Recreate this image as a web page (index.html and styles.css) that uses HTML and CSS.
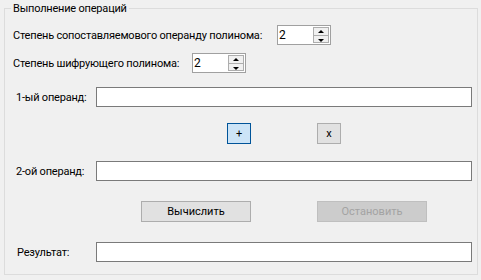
FILE: index.html
```html
<!DOCTYPE html>
<html lang="ru">
<head>
  <meta charset="UTF-8" />
  <title>Выполнение операций</title>
  <link rel="stylesheet" href="styles.css">
</head>
<body>

<fieldset class="group">
  <legend>Выполнение операций</legend>

  <div class="row row-deg1">
    <label class="lbl lbl-deg1">Степень сопоставляемового операнду полинома:</label>
    <div class="spin">
      <input type="text" value="2" />
      <div class="spin-btns">
        <span class="spin-up"></span>
        <span class="spin-down"></span>
      </div>
    </div>
  </div>

  <div class="row row-deg2">
    <label class="lbl lbl-deg2">Степень шифрующего полинома:</label>
    <div class="spin">
      <input type="text" value="2" />
      <div class="spin-btns">
        <span class="spin-up"></span>
        <span class="spin-down"></span>
      </div>
    </div>
  </div>

  <div class="row row-op1">
    <label class="lbl lbl-op">1-ый операнд:</label>
    <input class="field" type="text" />
  </div>

  <div class="row row-ops">
    <button class="btn small focus">+</button>
    <button class="btn small">x</button>
  </div>

  <div class="row row-op2">
    <label class="lbl lbl-op">2-ой операнд:</label>
    <input class="field" type="text" />
  </div>

  <div class="row row-actions">
    <button class="btn wide">Вычислить</button>
    <button class="btn wide" disabled>Остановить</button>
  </div>

  <div class="row row-result">
    <label class="lbl lbl-res">Результат:</label>
    <input class="field" type="text" />
  </div>
</fieldset>

</body>
</html>
```

FILE: styles.css
```css
body {
  margin: 0;
  background: #f0f0f0;
  font-family: Roboto, 'Liberation Sans', Arial, sans-serif;
  font-size: 11px;
  letter-spacing: -0.2px;
  color: #000;
}
.group {
  margin: 1px 3px 5px 4px;
  padding: 0 0 12px 0;
  border: 1px solid #dcdcdc;
  min-width: 0;
}
.group legend {
  margin-left: 6px;
  padding: 0 2px;
  line-height: 15px;
}
.row {
  display: flex;
  align-items: center;
  height: 20px;
}
.row-deg1 { margin-top: 9px; padding-left: 8px; }
.row-deg2 { margin-top: 8px; padding-left: 8px; }
.row-op1 { margin-top: 14px; padding-left: 11px; }
.row-ops { margin-top: 16px; height: 21px; padding-left: 222px; gap: 66px; }
.row-op2 { margin-top: 17px; padding-left: 11px; }
.row-actions { margin-top: 20px; height: 21px; padding-left: 136px; gap: 66px; }
.row-result { margin-top: 20px; padding-left: 12px; }

.lbl {
  flex: none;
  white-space: nowrap;
}
.lbl-deg1 { width: 264px; }
.lbl-deg2 { width: 179px; }
.lbl-op { width: 80px; }
.lbl-res { width: 79px; }

.field {
  width: 376px;
  height: 20px;
  box-sizing: border-box;
  border: 1px solid #7a7a7a;
  background: #fff;
  margin: 0;
  padding: 0 2px;
  font: inherit;
}

.spin {
  display: flex;
  width: 54px;
  height: 20px;
  box-sizing: border-box;
  border: 1px solid #a0a0a0;
  background: #fff;
}
.spin input {
  flex: 1;
  min-width: 0;
  border: none;
  margin: 0;
  padding: 0 1px;
  font: inherit;
  font-size: 12px;
  outline: none;
  background: transparent;
}
.spin-btns {
  display: flex;
  flex-direction: column;
  width: 16px;
  padding: 1px 1px 1px 0;
}
.spin-up, .spin-down {
  flex: 1;
  position: relative;
  background: #f0f0f0;
  border: 1px solid #adadad;
}
.spin-up { border-bottom-width: 0; }
.spin-up::after, .spin-down::after {
  content: '';
  position: absolute;
  left: 4px;
  border-left: 3px solid transparent;
  border-right: 3px solid transparent;
}
.spin-up::after { top: 2px; border-bottom: 3px solid #000; }
.spin-down::after { top: 3px; border-top: 3px solid #000; }

.btn {
  box-sizing: border-box;
  height: 21px;
  margin: 0;
  padding: 0;
  border: 1px solid #adadad;
  background: #e1e1e1;
  font: inherit;
  color: #000;
}
.btn.small { width: 24px; }
.btn.wide { width: 110px; }
.btn.focus {
  border-color: #005499;
  background: #cce4f7;
}
.btn:disabled {
  border-color: #bfbfbf;
  background: #cccccc;
  color: #a3a3a3;
}
```
